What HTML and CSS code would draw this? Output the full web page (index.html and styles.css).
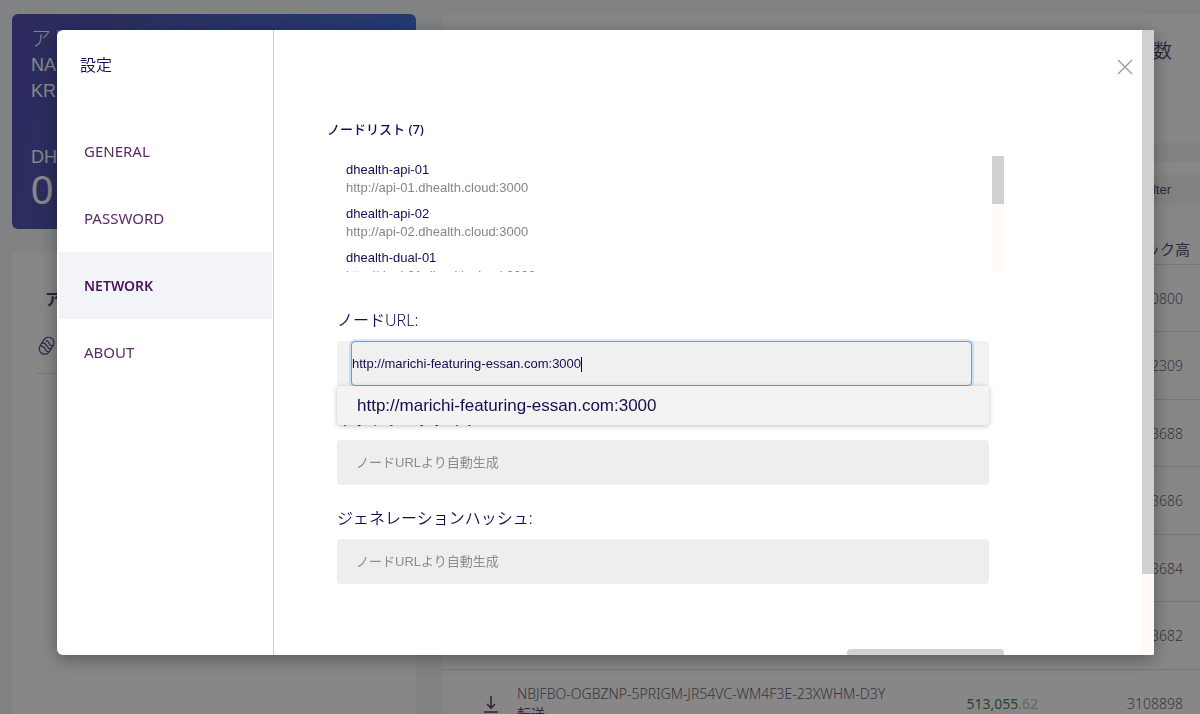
FILE: index.html
```html
<!DOCTYPE html>
<html lang="ja">
<head>
    <meta charset="UTF-8">
    <meta name="viewport" content="width=device-width, initial-scale=1.0">
    <title>設定</title>
    <link rel="stylesheet" href="styles.css">
</head>
<body>
    <div class="app">
        <div class="side">
            <div class="account">
                <p class="account-label">アド</p>
                <p>NA</p>
                <p>KR</p>
                <p class="account-currency">DH</p>
                <p class="account-balance">0</p>
            </div>
            <div class="assets">
                <h2>ア</h2>
                <div class="asset">
                    <svg width="20" height="20" viewBox="0 0 20 20" fill="none" stroke="#191580" stroke-width="1.2">
                        <g transform="rotate(32 10 10)">
                            <rect x="4" y="1" width="11" height="18" rx="5.5"/>
                            <path d="M6 6.500q2-2 4 0t5 0M4 10q3-2 6 0t5 0M4 13.500q3-2 6 0t4 0"/>
                        </g>
                    </svg>
                </div>
            </div>
        </div>
        <div class="content">
            <div class="summary">数</div>
            <div class="history">
                <div class="filter">Filter</div>
                <table>
                    <colgroup>
                        <col class="col-icon">
                        <col>
                        <col class="col-amount">
                        <col class="col-height">
                    </colgroup>
                    <thead>
                        <tr><th></th><th></th><th></th><th>ック高</th></tr>
                    </thead>
                    <tbody>
                        <tr><td></td><td></td><td></td><td>0800</td></tr>
                        <tr><td></td><td></td><td></td><td>2309</td></tr>
                        <tr><td></td><td></td><td></td><td>3688</td></tr>
                        <tr><td></td><td></td><td></td><td>3686</td></tr>
                        <tr><td></td><td></td><td></td><td>3684</td></tr>
                        <tr><td></td><td></td><td></td><td>3682</td></tr>
                        <tr>
                            <td>
                                <svg width="16" height="20" viewBox="0 0 16 20" fill="none" stroke="#35083c" stroke-width="1.6">
                                    <path d="M8 2v12M4 10l4 4 4-4M1 18h14"/>
                                </svg>
                            </td>
                            <td>NBJFBO-OGBZNP-5PRIGM-JR54VC-WM4F3E-23XWHM-D3Y<br><span class="kind">転送</span></td>
                            <td><span class="amount">513,055<span>.62</span></span></td>
                            <td>3108898</td>
                        </tr>
                    </tbody>
                </table>
            </div>
        </div>
    </div>

    <div class="mask">
        <section class="modal" role="dialog" aria-labelledby="title">
            <nav class="menu">
                <h1 id="title">設定</h1>
                <a href="#general">GENERAL</a>
                <a href="#password">PASSWORD</a>
                <a href="#network" class="active">NETWORK</a>
                <a href="#about">ABOUT</a>
            </nav>
            <div class="main">
                <button class="close" type="button" aria-label="Close">
                    <svg width="16" height="16" viewBox="0 0 16 16" stroke="#999" stroke-width="1.3">
                        <path d="M1 1l14 14M15 1L1 15"/>
                    </svg>
                </button>
                <h2>ノードリスト (7)</h2>
                <div class="nodes">
                    <ul>
                        <li><b>dhealth-api-01</b><span>http://api-01.dhealth.cloud:3000</span></li>
                        <li><b>dhealth-api-02</b><span>http://api-02.dhealth.cloud:3000</span></li>
                        <li><b>dhealth-dual-01</b><span>http://dual-01.dhealth.cloud:3000</span></li>
                    </ul>
                    <div class="scroll nodes-scroll"><i></i></div>
                </div>
                <form>
                    <label for="url">ノードURL:</label>
                    <div class="combo">
                        <div class="combo-input">
                            <input id="url" type="text" value="http://marichi-featuring-essan.com:3000">
                            <i class="caret"></i>
                        </div>
                        <button class="option" type="button">http://marichi-featuring-essan.com:3000</button>
                    </div>
                    <label for="type">ネットワークタイプ:</label>
                    <input id="type" class="auto" type="text" placeholder="ノードURLより自動生成" disabled>
                    <label for="hash">ジェネレーションハッシュ:</label>
                    <input id="hash" class="auto" type="text" placeholder="ノードURLより自動生成" disabled>
                </form>
                <button class="submit" type="button" aria-label="Save"></button>
            </div>
            <div class="scroll"><i></i></div>
        </section>
    </div>
</body>
</html>
```

FILE: styles.css
```css
*{
    box-sizing: border-box;
}

body{
    margin: 0;
    height: 100vh;
    overflow: hidden;
    background: #eef3f7;
    color: #1b0a50;
    font-family: "Noto Sans", "Noto Sans CJK JP", sans-serif;
}

h1, h2, p, ul{
    margin: 0;
    padding: 0;
}

/* wallet page under the dialog */
.app{
    display: flex;
    gap: 27px;
    height: 100vh;
    padding: 14px 0 0 12px;
    overflow: hidden;
}

.side{
    flex: 0 0 404px;
    display: flex;
    flex-direction: column;
    gap: 24px;
}

.account{
    height: 215px;
    padding: 12px 19px;
    border-radius: 6px;
    background: linear-gradient(100deg, #22189a, #17299e 30%, #0c44cc);
    color: #fff;
    font: 18px/26px "Liberation Sans", "Noto Sans CJK JP", sans-serif;
}

.account-label{
    font-size: 20px;
    font-weight: 300;
}

.account-currency{
    margin-top: 40px;
}

.account-balance{
    font-size: 40px;
    line-height: 40px;
}

.assets{
    flex: 1;
    padding: 34px 25px;
    background: #fff;
}

.assets h2{
    padding-left: 8px;
    font-size: 16px;
    line-height: 24px;
}

.asset{
    padding: 25px 0 17px;
    border-bottom: 1px solid #d8d8d8;
}

.asset svg{
    display: block;
}

.content{
    flex: 1;
}

.summary{
    height: 129px;
    margin-bottom: 19px;
    padding: 22px 28px;
    background: #fff;
    font-size: 19px;
    font-weight: 350;
    line-height: 30px;
    text-align: right;
}

.history{
    height: 600px;
    padding-top: 13px;
    background: #fff;
}

.filter{
    height: 30px;
    padding-right: 29px;
    background: #f3f3f3;
    font: 13px/30px "Liberation Sans", sans-serif;
    text-align: right;
}

table{
    width: 100%;
    table-layout: fixed;
    border-collapse: collapse;
    font-weight: 300;
}

.col-icon{
    width: 74px;
}

.col-amount{
    width: 120px;
}

.col-height{
    width: 162px;
}

th, td{
    height: 67px;
    padding: 2px 0 0;
    border-bottom: 1px solid #d8d8d8;
    font-size: 14px;
    line-height: 20px;
    text-align: left;
    color: #35304a;
}

tr:nth-child(even) td{
    height: 68px;
}

th{
    height: 59px;
    padding-top: 29px;
    font-size: 15px;
    font-weight: 400;
    color: #1b0a50;
}

td:first-child{
    padding-left: 40px;
}

td svg{
    display: block;
}

th:last-child{
    padding-right: 10px;
    text-align: right;
}

td:last-child{
    padding-right: 17px;
    text-align: right;
}

td:nth-child(3){
    text-align: right;
}

.kind{
    color: #1b0a50;
    font-weight: 400;
}

.amount{
    color: #0a5a10;
    font-weight: 400;
}

.amount span{
    opacity: .45;
}

/* settings dialog */
.mask{
    position: fixed;
    inset: 0;
    display: flex;
    padding: 30px 46px 59px 57px;
    background: rgba(55, 55, 55, .6);
}

.modal{
    flex: 1;
    display: flex;
    overflow: hidden;
    border-radius: 6px 2px 2px 6px;
    background: #fff;
    box-shadow: 0 4px 18px rgba(0, 0, 0, .35);
}

.menu{
    flex: 0 0 217px;
    border-right: 1px solid #ccc;
}

.menu h1{
    height: 88px;
    padding: 23px;
    font-size: 16px;
    font-weight: 350;
    line-height: 24px;
}

.menu a{
    display: block;
    margin: 0 1px 0 2px;
    padding-left: 25px;
    color: #5a2a66;
    font: 15px/67px "Noto Sans", sans-serif;
    text-decoration: none;
}

.menu a.active{
    background: #f2f4f8;
    color: #4a1458;
    font-size: 14px;
    font-weight: 600;
}

.main{
    position: relative;
    flex: 1;
    padding: 90px 138px 0 53px;
    overflow: hidden;
}

.main h2{
    font: 500 13px/18px "Noto Sans", "Noto Sans CJK JP", sans-serif;
}

.close{
    position: absolute;
    top: 29px;
    right: 9px;
    padding: 0;
    border: 0;
    background: none;
}

.close svg{
    display: block;
}

.nodes{
    display: flex;
    height: 116px;
    margin: 18px 0 36px;
    overflow: hidden;
}

.nodes ul{
    flex: 1;
    padding: 5px 19px;
    list-style: none;
}

.nodes li{
    margin-bottom: 8px;
    font: 13px/18px "Liberation Sans", sans-serif;
}

.nodes b, .nodes li span{
    display: block;
    font-weight: 400;
}

.nodes li span{
    color: #868686;
}

.scroll{
    flex: 0 0 12px;
    background: #fffaf8;
}

.scroll i{
    display: block;
    height: 87%;
    background: #d0d0d0;
}

.nodes-scroll i{
    height: 48px;
}

form{
    display: flex;
    flex-direction: column;
    padding: 0 15px 0 10px;
}

label{
    margin-bottom: 9px;
    font-size: 16px;
    font-weight: 350;
    line-height: 24px;
}

.combo{
    position: relative;
    height: 45px;
    margin-bottom: 21px;
    padding: 0 17px 0 14px;
    background: #f2f2f2;
}

.combo-input{
    position: relative;
}

.combo input{
    display: block;
    width: 100%;
    height: 45px;
    padding: 0;
    border: 1px solid #57a3f3;
    border-radius: 4px;
    outline: 0;
    background: #f0f0f0;
    box-shadow: 0 0 0 2px rgba(45, 140, 240, .2);
    color: #1b0a50;
    font: 13px "Liberation Sans", sans-serif;
}

.caret{
    position: absolute;
    top: 16px;
    left: 230px;
    width: 1px;
    height: 15px;
    background: #000;
}

.option{
    position: absolute;
    top: 45px;
    left: 0;
    width: 100%;
    height: 39px;
    padding: 0 20px;
    border: 0;
    border-radius: 0 0 4px 4px;
    background: #f3f3f3;
    box-shadow: 0 1px 5px rgba(0, 0, 0, .25);
    color: #1b0a50;
    font: 17px "Liberation Sans", sans-serif;
    text-align: left;
}

.auto{
    height: 45px;
    margin-bottom: 21px;
    padding: 0 19px;
    border: 0;
    border-radius: 4px;
    background: #eee;
    font: 13px "Liberation Sans", "Noto Sans CJK JP", sans-serif;
}

.auto::placeholder{
    color: #8c8c8c;
}

.submit{
    display: block;
    width: 157px;
    height: 40px;
    margin: 44px 0 0 auto;
    border: 0;
    border-radius: 4px;
    background: #d2d2d2;
}
```
